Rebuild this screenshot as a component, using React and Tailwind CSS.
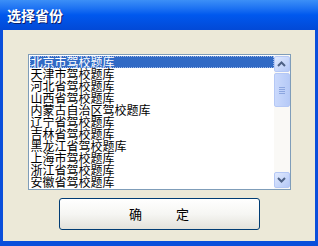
import React, { useState } from "react";

const provinces = [
  "北京市驾校题库",
  "天津市驾校题库",
  "河北省驾校题库",
  "山西省驾校题库",
  "内蒙古自治区驾校题库",
  "辽宁省驾校题库",
  "吉林省驾校题库",
  "黑龙江省驾校题库",
  "上海市驾校题库",
  "浙江省驾校题库",
  "安徽省驾校题库",
];

const Arrow = ({ down }) => (
  <svg width="9" height="6" viewBox="0 0 9 6" className={down ? "rotate-180" : ""}>
    <path d="M1 5 L4.5 1.5 L8 5" fill="none" stroke="#4D6185" strokeWidth="2" />
  </svg>
);

const App = () => {
  const [selected, setSelected] = useState(0);

  return (
    <div
      className="w-[318px] h-[246px] flex flex-col bg-[#0A4FDB] overflow-hidden"
      style={{ fontFamily: '"Noto Sans CJK SC", "Liberation Sans", sans-serif' }}
    >
      {/* Title bar */}
      <div className="h-[30px] flex items-center pl-[7px] bg-gradient-to-b from-[#3C8FF7] via-[#0058EE] to-[#0249D6]">
        <span className="text-white text-[14px] font-bold leading-none [text-shadow:1px_1px_0_#0A1E6E]">
          选择省份
        </span>
      </div>

      {/* Body */}
      <div className="flex-1 mx-[3px] mb-[5px] bg-[#ECE9D8] flex flex-col items-center pt-[24px]">
        {/* List box */}
        <div className="w-[263px] h-[136px] border border-[#7F9DB9] bg-white flex">
          <div className="flex-1 pt-[1px] pl-[1px] overflow-hidden">
            {provinces.map((p, i) => (
              <div
                key={p}
                onClick={() => setSelected(i)}
                className={
                  "h-[12px] text-[12px] leading-[12px] pl-[1px] whitespace-nowrap " +
                  (i === selected
                    ? "bg-[#316AC5] text-white outline outline-1 outline-dotted outline-[#9FB8E6] -outline-offset-1"
                    : "text-black")
                }
              >
                {p}
              </div>
            ))}
          </div>

          {/* Scrollbar */}
          <div className="w-[16px] flex flex-col bg-[#FAF9F6] py-[1px]">
            <div className="h-[16px] flex items-center justify-center rounded-[2px] border border-[#B5C8F5] bg-gradient-to-br from-[#E1EAFE] to-[#B4C8F6]">
              <Arrow />
            </div>
            <div className="h-[34px] mt-[1px] flex flex-col items-center justify-center gap-[1px] rounded-[2px] border border-[#B5C8F5] bg-gradient-to-r from-[#CAD9FC] to-[#B6CAF7]">
              <div className="w-[6px] h-[1px] bg-[#8CA6E0]" />
              <div className="w-[6px] h-[1px] bg-[#8CA6E0]" />
              <div className="w-[6px] h-[1px] bg-[#8CA6E0]" />
              <div className="w-[6px] h-[1px] bg-[#8CA6E0]" />
            </div>
            <div className="flex-1" />
            <div className="h-[16px] flex items-center justify-center rounded-[2px] border border-[#B5C8F5] bg-gradient-to-br from-[#E1EAFE] to-[#B4C8F6]">
              <Arrow down />
            </div>
          </div>
        </div>

        {/* OK button */}
        <button className="mt-[8px] w-[201px] h-[32px] rounded-[3px] border border-[#003C74] bg-gradient-to-b from-[#FFFFFF] via-[#F6F6F3] to-[#E3E2DB] flex items-center justify-center text-[13px] text-black">
          <span>确</span>
          <span className="ml-[34px]">定</span>
        </button>
      </div>
    </div>
  );
};

export default App;
